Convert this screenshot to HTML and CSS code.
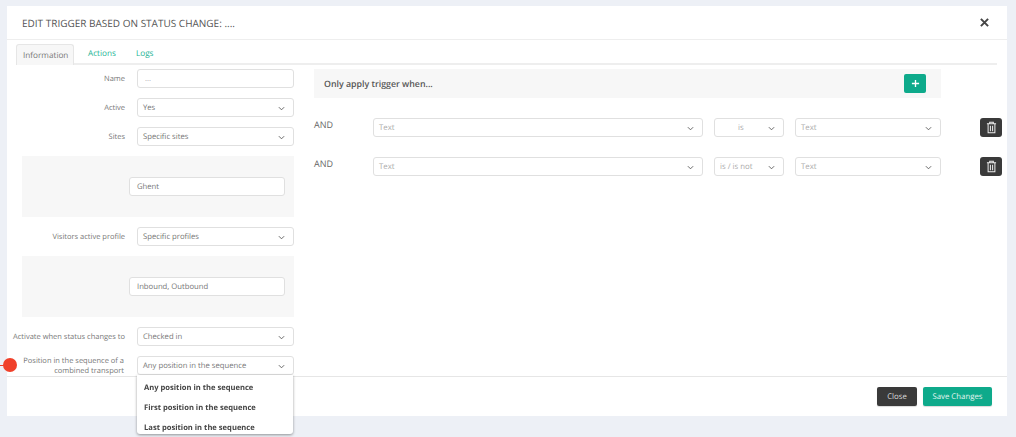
FILE: index.html
```html
<!DOCTYPE html>
<html lang="en">
<head>
<meta charset="utf-8">
<title>Edit trigger</title>
<link rel="stylesheet" href="styles.css">
</head>
<body>
<span class="pin"></span>
<div class="modal">
  <header class="modal-head">
    <h1>EDIT TRIGGER BASED ON STATUS CHANGE: ....</h1>
    <svg class="close-x" viewBox="0 0 10 10" width="9" height="9"><path d="M1 1L9 9M9 1L1 9" stroke="#444" stroke-width="2.2" fill="none"/></svg>
  </header>
  <nav class="tabs">
    <span class="tab active">Information</span>
    <span class="tab">Actions</span>
    <span class="tab">Logs</span>
  </nav>
  <div class="content">
    <section class="left">
      <div class="row"><label>Name</label><div class="field"><span class="dots">...</span></div></div>
      <div class="row"><label>Active</label><div class="field select">Yes<svg class="chev" viewBox="0 0 8 5"><path d="M1 1l3 3 3-3"/></svg></div></div>
      <div class="row"><label>Sites</label><div class="field select">Specific sites<svg class="chev" viewBox="0 0 8 5"><path d="M1 1l3 3 3-3"/></svg></div></div>
      <div class="well"><div class="field inner">Ghent</div></div>
      <div class="row"><label>Visitors active profile</label><div class="field select">Specific profiles<svg class="chev" viewBox="0 0 8 5"><path d="M1 1l3 3 3-3"/></svg></div></div>
      <div class="well"><div class="field inner">Inbound, Outbound</div></div>
      <div class="row"><label>Activate when status changes to</label><div class="field select">Checked in<svg class="chev" viewBox="0 0 8 5"><path d="M1 1l3 3 3-3"/></svg></div></div>
      <div class="row last"><label>Position in the sequence of a combined transport</label>
        <div class="field select open">Any position in the sequence<svg class="chev" viewBox="0 0 8 5"><path d="M1 1l3 3 3-3"/></svg>
          <ul class="menu">
            <li>Any position in the sequence</li>
            <li>First position in the sequence</li>
            <li>Last position in the sequence</li>
          </ul>
        </div>
      </div>
    </section>
    <section class="right">
      <div class="bar"><strong>Only apply trigger when...</strong><button class="add"><svg viewBox="0 0 10 10" width="9" height="9"><path d="M5 1v8M1 5h8" stroke="#fff" stroke-width="1.5" fill="none"/></svg></button></div>
      <div class="cond">
        <span class="and">AND</span>
        <div class="field select ph c1">Text<svg class="chev" viewBox="0 0 8 5"><path d="M1 1l3 3 3-3"/></svg></div>
        <div class="field select ph c2"><span class="is">is</span><svg class="chev" viewBox="0 0 8 5"><path d="M1 1l3 3 3-3"/></svg></div>
        <div class="field select ph c3">Text<svg class="chev" viewBox="0 0 8 5"><path d="M1 1l3 3 3-3"/></svg></div>
        <button class="trash"><svg viewBox="0 0 12 14" width="11" height="13"><path d="M1 3h10M4 3V1.2h4V3M2.3 3v9.8h7.4V3M4.8 5v6M7.2 5v6" stroke="#eee" stroke-width="1.1" fill="none"/></svg></button>
      </div>
      <div class="cond">
        <span class="and">AND</span>
        <div class="field select ph c1">Text<svg class="chev" viewBox="0 0 8 5"><path d="M1 1l3 3 3-3"/></svg></div>
        <div class="field select ph c2">is / is not<svg class="chev" viewBox="0 0 8 5"><path d="M1 1l3 3 3-3"/></svg></div>
        <div class="field select ph c3">Text<svg class="chev" viewBox="0 0 8 5"><path d="M1 1l3 3 3-3"/></svg></div>
        <button class="trash"><svg viewBox="0 0 12 14" width="11" height="13"><path d="M1 3h10M4 3V1.2h4V3M2.3 3v9.8h7.4V3M4.8 5v6M7.2 5v6" stroke="#eee" stroke-width="1.1" fill="none"/></svg></button>
      </div>
    </section>
  </div>
  <footer class="foot">
    <button class="btn dark">Close</button>
    <button class="btn green">Save Changes</button>
  </footer>
</div>
</body>
</html>
```
FILE: styles.css
```css
* { box-sizing: border-box; }
html, body { margin: 0; height: 100%; }
body {
  background: #edf0f6;
  padding: 6px 9px 0 7px;
  font-family: "Open Sans", sans-serif;
  font-size: 8px;
  color: #666;
  overflow: hidden;
  position: relative;
  text-rendering: geometricPrecision;
}
.pin {
  position: absolute;
  left: 0;
  top: 358px;
  width: 17px;
  height: 14px;
  z-index: 10;
}
.pin::before {
  content: "";
  position: absolute;
  left: 3px;
  top: 0;
  width: 14px;
  height: 14px;
  border-radius: 50%;
  background: #f0402a;
}
.pin::after {
  content: "";
  position: absolute;
  left: 0;
  top: 6.5px;
  width: 4px;
  height: 1px;
  background: #f0402a;
}
.modal {
  width: 1000px;
  height: 410px;
  background: #fff;
  display: flex;
  flex-direction: column;
  filter: blur(0.3px);
}
.modal-head {
  height: 34px;
  flex: none;
  padding: 0 18px 0 15px;
  border-bottom: 1px solid #eee;
  display: flex;
  align-items: center;
  justify-content: space-between;
}
.modal-head h1 {
  margin: 0;
  font-size: 10px;
  font-weight: 400;
  color: #555;
}
.tabs {
  height: 25px;
  flex: none;
  margin: 0 10px 0 9px;
  padding-top: 4px;
  border-bottom: 2px solid #eee;
  display: flex;
  align-items: flex-start;
  gap: 14px;
  font-size: 8.2px;
}
.tab {
  color: #1fb596;
  padding-top: 4px;
}
.tab.active {
  height: 21px;
  width: 58px;
  padding: 5px 0 0 6px;
  color: #777;
  background: #f7f7f7;
  border: 1px solid #e6e6e6;
  border-bottom: 0;
  border-radius: 3px 3px 0 0;
}
.tab + .tab + .tab { margin-left: 6px; }
.content {
  flex: 1;
  display: flex;
  padding: 4px 0 0 15px;
  min-height: 0;
}
.left {
  width: 272px;
  flex: none;
  display: flex;
  flex-direction: column;
  gap: 10px;
}
.row {
  display: flex;
  align-items: center;
  height: 19px;
}
.row label {
  width: 116px;
  margin: 0 12px 0 -13px;
  padding-top: 1px;
  flex: none;
  text-align: right;
  font-size: 7.5px;
  line-height: 10.5px;
  color: #777;
}
.row.last label {
  width: 102px;
  margin: 0 13px 0 0;
}
.field {
  height: 19px;
  border: 1px solid #e0e0e0;
  border-radius: 3px;
  background: #fff;
  padding: 1px 5px 0;
  display: flex;
  align-items: center;
  font-size: 7.7px;
  color: #777;
  position: relative;
}
.row .field { width: 157px; }
.select { justify-content: space-between; }
.chev {
  width: 7px;
  height: 5px;
  flex: none;
  margin-right: 3px;
  fill: none;
  stroke: #555;
  stroke-width: 1;
}
.dots { padding-left: 2px; color: #999; }
.well {
  height: 61px;
  background: #f7f7f7;
  display: flex;
  align-items: center;
  padding-left: 107px;
}
.inner { width: 156px; padding: 1px 7px 0; }
.menu {
  position: absolute;
  left: -1px;
  top: 18px;
  width: 156px;
  height: 59px;
  margin: 0;
  padding: 2px 0 0;
  list-style: none;
  background: #fff;
  border-radius: 0 0 3px 3px;
  box-shadow: 0 1px 3px rgba(0, 0, 0, 0.4);
  z-index: 5;
}
.menu li {
  height: 20px;
  padding: 2px 0 0 7px;
  display: flex;
  align-items: center;
  font-size: 7.6px;
  font-weight: 700;
  color: #444;
}
.right {
  margin-left: 20px;
  width: 688px;
  flex: none;
}
.bar {
  width: 627px;
  height: 29px;
  background: #f7f7f7;
  display: flex;
  align-items: center;
  justify-content: space-between;
  padding: 0 15px 0 10px;
}
.bar strong {
  font-weight: 600;
  font-size: 8.8px;
  color: #555;
}
.add {
  width: 22px;
  height: 19px;
  padding: 0;
  border: 0;
  border-radius: 2px;
  background: #0eaa8b;
  display: flex;
  align-items: center;
  justify-content: center;
}
.cond {
  display: flex;
  margin-top: 20px;
  height: 19px;
}
.and {
  width: 59px;
  flex: none;
  font-size: 9px;
  line-height: 13px;
  color: #666;
}
.ph { color: #aaa; font-size: 7.8px; }
.c1 { width: 330px; margin-right: 11px; }
.c2 { width: 70px; margin-right: 11px; }
.c3 { width: 146px; margin-right: 39px; }
.is { margin-left: 18px; }
.trash {
  width: 22px;
  height: 19px;
  padding: 0;
  border: 0;
  border-radius: 3px;
  background: #3a3a3a;
  display: flex;
  align-items: center;
  justify-content: center;
}
.foot {
  height: 40px;
  flex: none;
  border-top: 1px solid #e6e6e6;
  display: flex;
  align-items: flex-start;
  justify-content: flex-end;
  gap: 6px;
  padding: 10px 15px 0 0;
}
.btn {
  height: 19px;
  padding: 0;
  border: 0;
  border-radius: 2px;
  font-family: inherit;
  font-size: 7.8px;
  color: #ddd;
  box-shadow: 0 1px 1px rgba(0, 0, 0, 0.15);
  text-rendering: geometricPrecision;
}
.dark { width: 40px; background: #3a3a3a; }
.green { width: 69px; background: #0eaa8b; color: #e4f5f1; }
```
